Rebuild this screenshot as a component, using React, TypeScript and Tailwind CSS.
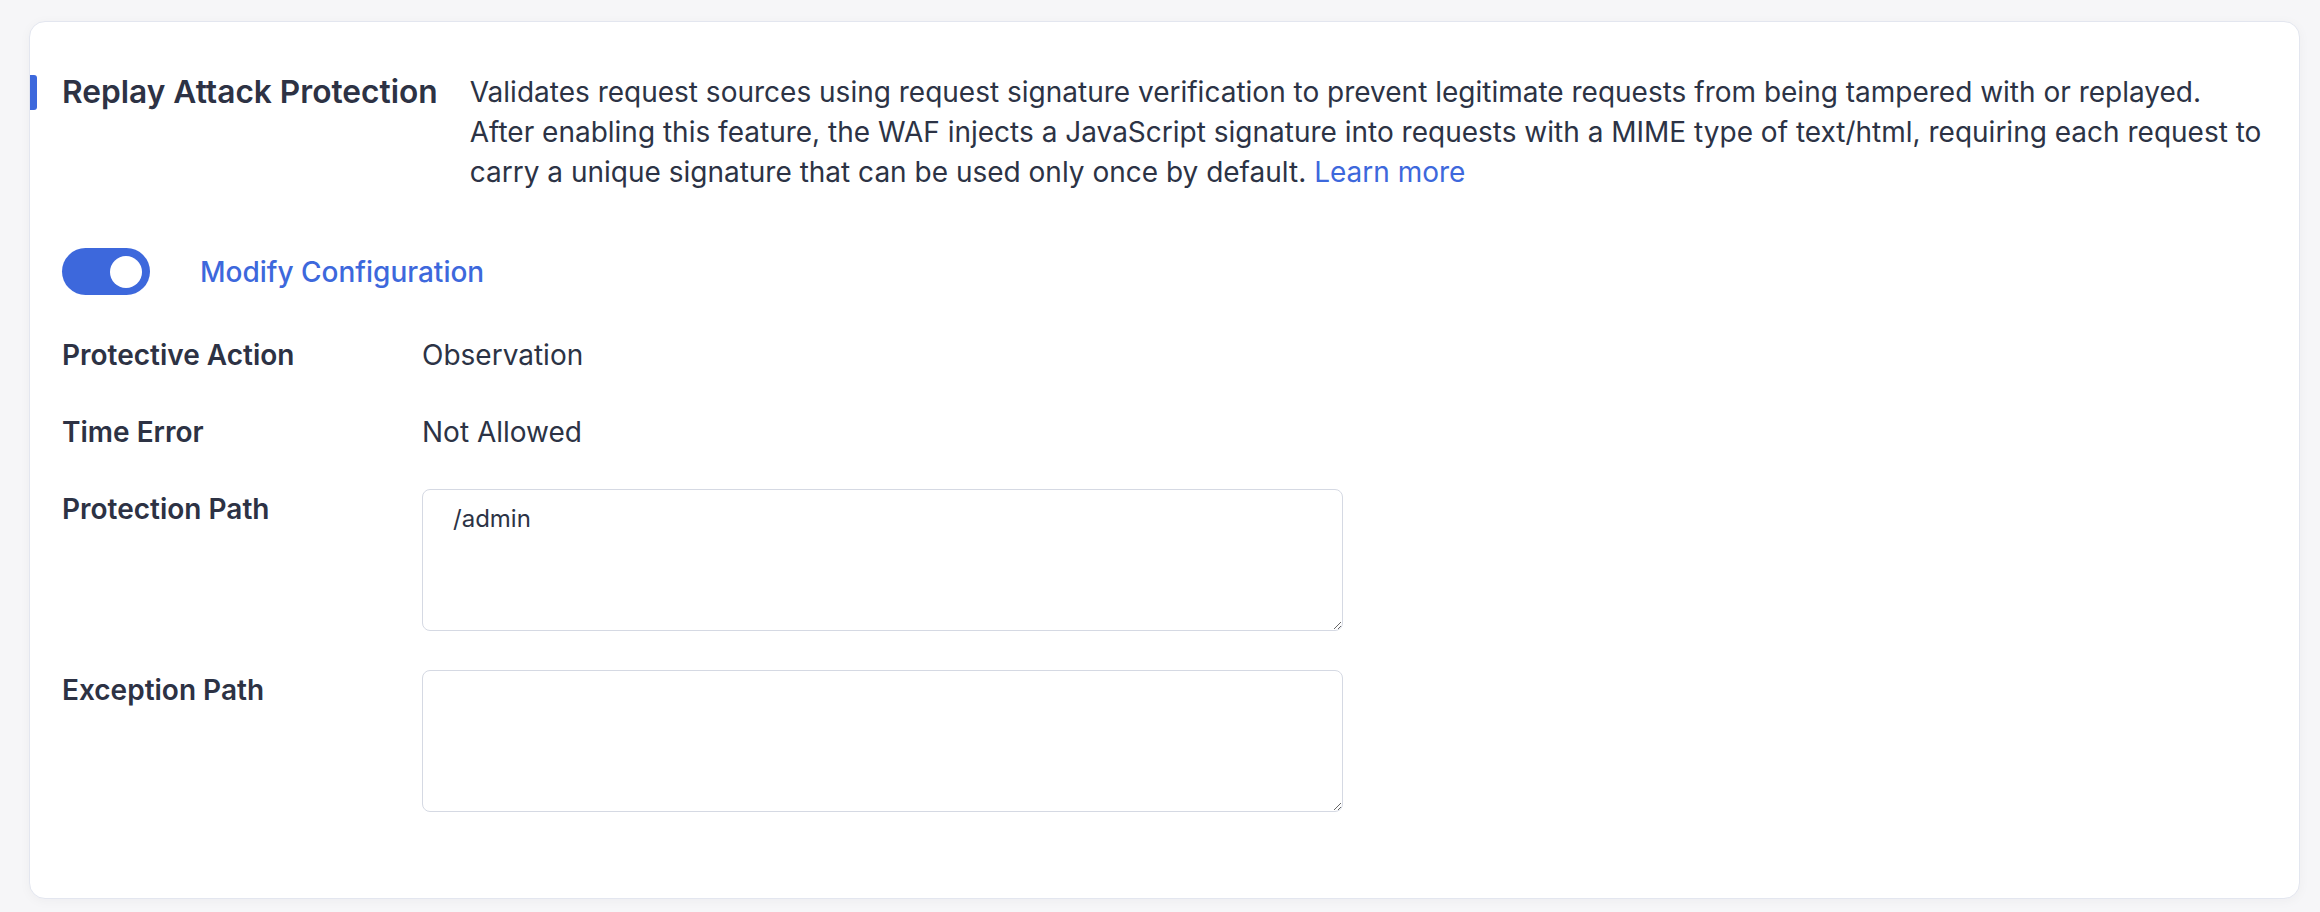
import { useState } from 'react';

const fields = [
  { label: 'Protective Action', value: 'Observation' },
  { label: 'Time Error', value: 'Not Allowed' },
];

export default function App() {
  const [enabled, setEnabled] = useState(true);

  return (
    <div
      className="min-h-[912px] bg-[#f6f6f8] pt-[21px] pl-[29px] pr-[20px] pb-[14px] text-[#2c3345]"
      style={{ fontFamily: 'Inter, "Noto Sans", sans-serif' }}
    >
      <div className="rounded-2xl border border-[#e3e6ef] bg-white pl-8 pr-[20px] pt-[50px] pb-[86px] shadow-[0_2px_12px_rgba(15,23,42,0.04)]">
        {/* Header */}
        <div className="relative flex gap-8">
          <span className="absolute -left-8 top-[3px] h-[35px] w-[7px] rounded-r-[3px] bg-[#3d68dc]" />
          <h2 className="shrink-0 text-[31.7px] leading-[40px] font-semibold text-[#2d3244]">
            Replay Attack Protection
          </h2>
          <p className="text-[28px] leading-[40px] text-[#2c3345]">
            Validates request sources using request signature verification to prevent legitimate requests from being tampered with or replayed.
            <br />
            After enabling this feature, the WAF injects a JavaScript signature into requests with a MIME type of text/html, requiring each request to carry a unique signature that can be used only once by default.{' '}
            <a href="#" className="text-[#3d68dc]">
              Learn more
            </a>
          </p>
        </div>

        {/* Toggle */}
        <div className="mt-[56px] flex items-center gap-[50px]">
          <button
            type="button"
            onClick={() => setEnabled(!enabled)}
            className={`flex h-[47px] w-[88px] items-center rounded-full px-[8px] ${
              enabled ? 'justify-end bg-[#3d68dc]' : 'justify-start bg-[#c9ced8]'
            }`}
          >
            <span className="h-[32px] w-[32px] rounded-full bg-white" />
          </button>
          <a href="#" className="text-[28px] leading-[40px] font-medium text-[#3d68dc]">
            Modify Configuration
          </a>
        </div>

        {/* Fields */}
        <div className="mt-[40px] flex flex-col gap-[37px] text-[28px] leading-[40px]">
          {fields.map((f) => (
            <div key={f.label} className="flex">
              <span className="w-[360px] shrink-0 font-semibold text-[#2d3244]">{f.label}</span>
              <span>{f.value}</span>
            </div>
          ))}
          <div className="flex">
            <span className="w-[360px] shrink-0 font-semibold text-[#2d3244]">Protection Path</span>
            <textarea
              defaultValue="/admin"
              className="h-[142px] w-[921px] rounded-lg border border-[#d5d9e3] px-[30px] py-[12px] text-[24px] leading-[34px] text-[#2c3345] outline-none"
            />
          </div>
          <div className="mt-[2px] flex">
            <span className="w-[360px] shrink-0 font-semibold text-[#2d3244]">Exception Path</span>
            <textarea className="h-[142px] w-[921px] rounded-lg border border-[#d5d9e3] px-[30px] py-[12px] text-[24px] leading-[34px] text-[#2c3345] outline-none" />
          </div>
        </div>
      </div>
    </div>
  );
}
